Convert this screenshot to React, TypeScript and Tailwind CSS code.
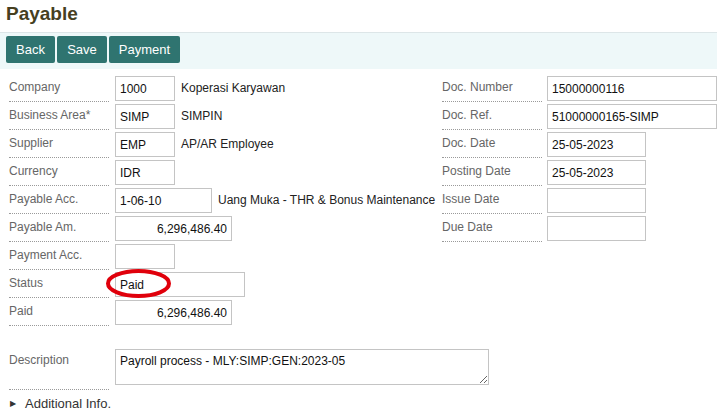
import React from 'react';

const labelCls =
  'w-[100px] shrink-0 h-[27px] leading-[24px] border-b border-dotted border-[#9a9a9a] text-[12px] text-[#666] whitespace-nowrap';
const inputCls =
  'h-[25px] border border-[#c4c4c4] bg-white px-[4px] text-[12px] text-[#111] outline-none';

function Row({
  label,
  gap = 6,
  children,
}: {
  label: string;
  gap?: number;
  children?: React.ReactNode;
}) {
  return (
    <div className="flex h-[28px]">
      <div className={labelCls}>{label}</div>
      <div className={`mt-[1px] flex items-start gap-[6px] ${gap === 6 ? 'ml-[6px]' : 'ml-[5px]'}`}>
        {children}
      </div>
    </div>
  );
}

function Field({ value, w, right }: { value: string; w: string; right?: boolean }) {
  return (
    <input
      readOnly
      value={value}
      className={`${inputCls} ${w} ${right ? 'text-right' : ''}`}
    />
  );
}

function Note({ children }: { children: React.ReactNode }) {
  return <span className="text-[12px] leading-[25px] text-[#222] whitespace-nowrap">{children}</span>;
}

export default function App() {
  return (
    <div
      className="relative w-[719px] h-[416px] overflow-hidden bg-white text-[13px]"
      style={{ fontFamily: '"Liberation Sans", Arial, sans-serif' }}
    >
      {/* Title */}
      <h1 className="pl-[6px] pt-[3px] h-[32px] text-[19px] font-bold leading-[22px] text-[#463f1f]">
        Payable
      </h1>

      {/* Toolbar */}
      <div className="mr-[2px] flex h-[37px] gap-[2px] border-t border-[#dde6e8] bg-[#eef8f9] pl-[6px] pt-[3px]">
        <button className="h-[27px] w-[49px] rounded-[2px] bg-[#2f7470] text-[13px] text-white">Back</button>
        <button className="h-[27px] w-[50px] rounded-[2px] bg-[#2f7470] text-[13px] text-white">Save</button>
        <button className="h-[27px] w-[71px] rounded-[2px] bg-[#2f7470] text-[13px] text-white">Payment</button>
      </div>

      {/* Form */}
      <div className="mt-[6px] flex pl-[9px]">
        <div className="w-[433px] shrink-0">
          <Row label="Company">
            <Field value="1000" w="w-[60px]" />
            <Note>Koperasi Karyawan</Note>
          </Row>
          <Row label="Business Area*">
            <Field value="SIMP" w="w-[60px]" />
            <Note>SIMPIN</Note>
          </Row>
          <Row label="Supplier">
            <Field value="EMP" w="w-[60px]" />
            <Note>AP/AR Employee</Note>
          </Row>
          <Row label="Currency">
            <Field value="IDR" w="w-[60px]" />
          </Row>
          <Row label="Payable Acc.">
            <Field value="1-06-10" w="w-[97px]" />
            <Note>Uang Muka - THR &amp; Bonus Maintenance</Note>
          </Row>
          <Row label="Payable Am.">
            <Field value="6,296,486.40" w="w-[117px]" right />
          </Row>
          <Row label="Payment Acc.">
            <Field value="" w="w-[60px]" />
          </Row>
          <Row label="Status">
            <Field value="Paid" w="w-[130px]" />
          </Row>
          <Row label="Paid">
            <Field value="6,296,486.40" w="w-[117px]" right />
          </Row>
        </div>

        <div>
          <Row label="Doc. Number" gap={5}>
            <Field value="15000000116" w="w-[170px]" />
          </Row>
          <Row label="Doc. Ref." gap={5}>
            <Field value="51000000165-SIMP" w="w-[170px]" />
          </Row>
          <Row label="Doc. Date" gap={5}>
            <Field value="25-05-2023" w="w-[99px]" />
          </Row>
          <Row label="Posting Date" gap={5}>
            <Field value="25-05-2023" w="w-[99px]" />
          </Row>
          <Row label="Issue Date" gap={5}>
            <Field value="" w="w-[99px]" />
          </Row>
          <Row label="Due Date" gap={5}>
            <Field value="" w="w-[99px]" />
          </Row>
        </div>
      </div>

      {/* Description */}
      <div className="mt-[21px] flex pl-[9px]">
        <div className="w-[100px] shrink-0 h-[42px] leading-[24px] border-b border-dotted border-[#9a9a9a] text-[12px] text-[#666]">
          Description
        </div>
        <textarea
          readOnly
          value="Payroll process - MLY:SIMP:GEN:2023-05"
          className="ml-[6px] mt-[1px] h-[36px] w-[374px] border border-[#c4c4c4] px-[4px] pt-[3px] text-[12px] leading-[16px] text-[#111] outline-none"
        />
      </div>

      {/* Additional info */}
      <div className="mt-[3px] flex items-center pl-[10px] h-[22px] text-[#333]">
        <span className="mr-[9px] text-[8px] leading-none">&#9654;</span>
        <span>Additional Info.</span>
      </div>

      {/* Highlight around status */}
      <svg
        className="pointer-events-none absolute left-[104px] top-[267px]"
        width="70"
        height="34"
        viewBox="0 0 70 34"
      >
        <ellipse cx="34.5" cy="16.5" rx="30.5" ry="12.5" fill="none" stroke="#e0000b" strokeWidth="4" />
      </svg>
    </div>
  );
}
